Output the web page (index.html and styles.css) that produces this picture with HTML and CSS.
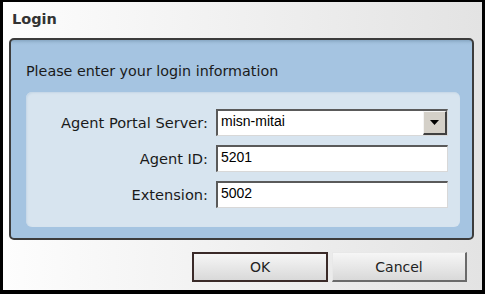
FILE: index.html
```html
<!doctype html>
<html>
<head>
  <meta charset="UTF-8">
  <link rel="stylesheet" href="styles.css">
</head>
<body>
  <div class="Dialog">
    <div class="Dialog-title">Login</div>
    <div class="Panel">
      <div class="Panel-caption">Please enter your login information</div>
      <div class="Form">
        <label class="Form-label">Agent Portal Server:</label>
        <div class="Combo">
          <span class="Combo-value">misn-mitai</span>
          <span class="Combo-button">
            <svg width="9" height="5" viewBox="0 0 9 5"><path d="M0 0h9L4.5 5z" fill="#000"/></svg>
          </span>
        </div>
        <label class="Form-label">Agent ID:</label>
        <div class="Field">5201</div>
        <label class="Form-label">Extension:</label>
        <div class="Field">5002</div>
      </div>
    </div>
    <div class="Dialog-footer">
      <button class="Btn Btn-default">OK</button>
      <button class="Btn">Cancel</button>
    </div>
  </div>
</body>
</html>
```

FILE: styles.css
```css
:root {
  --panel-blue: #a5c4e1;
  --panel-light: #d7e4ef;
  --text-color: #1a1a1a;
}

html, body {
  margin: 0;
  padding: 0;
  width: 485px;
  height: 294px;
  overflow: hidden;
  font-family: 'DejaVu Sans', Verdana, sans-serif;
  font-size: 14px;
  color: var(--text-color);
}

.Dialog {
  box-sizing: border-box;
  width: 485px;
  height: 294px;
  border-style: solid;
  border-color: #000;
  border-width: 2px 3px 4px 3px;
  background: linear-gradient(to right, #fdfdfd, #e3e3e3);
  display: flex;
  flex-direction: column;
}

.Dialog-title {
  height: 36px;
  box-sizing: border-box;
  padding: 9px 0 0 9px;
  font-size: 14.5px;
  font-weight: bold;
  color: #333;
}

.Panel {
  margin: 0 8px 0 6px;
  height: 202px;
  box-sizing: border-box;
  border: 2px solid #3c3c3c;
  border-radius: 5px;
  background: linear-gradient(to bottom, #88a8c4 0, #a0bfdb 3px, var(--panel-blue) 5px);
  padding: 22px 12px 11px 15px;
  display: flex;
  flex-direction: column;
}

.Panel-caption {
  height: 18px;
  line-height: 18px;
  margin-bottom: 12px;
  font-size: 14.3px;
}

.Form {
  flex: 1;
  background: var(--panel-light);
  border-radius: 6px;
  box-shadow: inset 1px 1px 2px #c4d6e6;
  padding: 17px 12px 19px 0;
  display: grid;
  grid-template-columns: 182px 1fr;
  column-gap: 8px;
  row-gap: 9px;
  align-items: center;
}

.Form-label {
  text-align: right;
  font-size: 14.6px;
}

.Field, .Combo {
  height: 27px;
  box-sizing: border-box;
  background: #fff;
  border-style: solid;
  border-width: 2px 1px 1px 2px;
  border-color: #5a5a5a #d8d8d8 #d8d8d8 #5a5a5a;
  font-family: 'Liberation Sans', Arial, sans-serif;
  font-size: 14px;
  color: #000;
  padding: 2px 0 0 3px;
}

.Combo {
  display: flex;
  padding: 0;
}

.Combo-value {
  flex: 1;
  padding: 2px 0 0 3px;
}

.Combo-button {
  width: 21px;
  background: #d4d0c8;
  border-style: solid;
  border-width: 1px 2px 2px 1px;
  border-color: #f4f4f4 #404040 #404040 #f4f4f4;
  display: flex;
  align-items: center;
  justify-content: center;
}

.Dialog-footer {
  display: flex;
  justify-content: flex-end;
  gap: 4px;
  padding: 12px 15px 0 0;
}

.Btn {
  height: 30px;
  width: 135px;
  box-sizing: border-box;
  font-family: 'DejaVu Sans', Verdana, sans-serif;
  font-size: 14px;
  color: #222;
  background: linear-gradient(to bottom, #f6f6f6, #d9d9d9);
  border-style: solid;
  border-width: 1px 2px 2px 1px;
  border-color: #e8e8e8 #6a6a6a #6a6a6a #e8e8e8;
  padding: 0;
}

.Btn-default {
  width: 136px;
  border-width: 2px;
  border-color: #3a2a28;
}
```
